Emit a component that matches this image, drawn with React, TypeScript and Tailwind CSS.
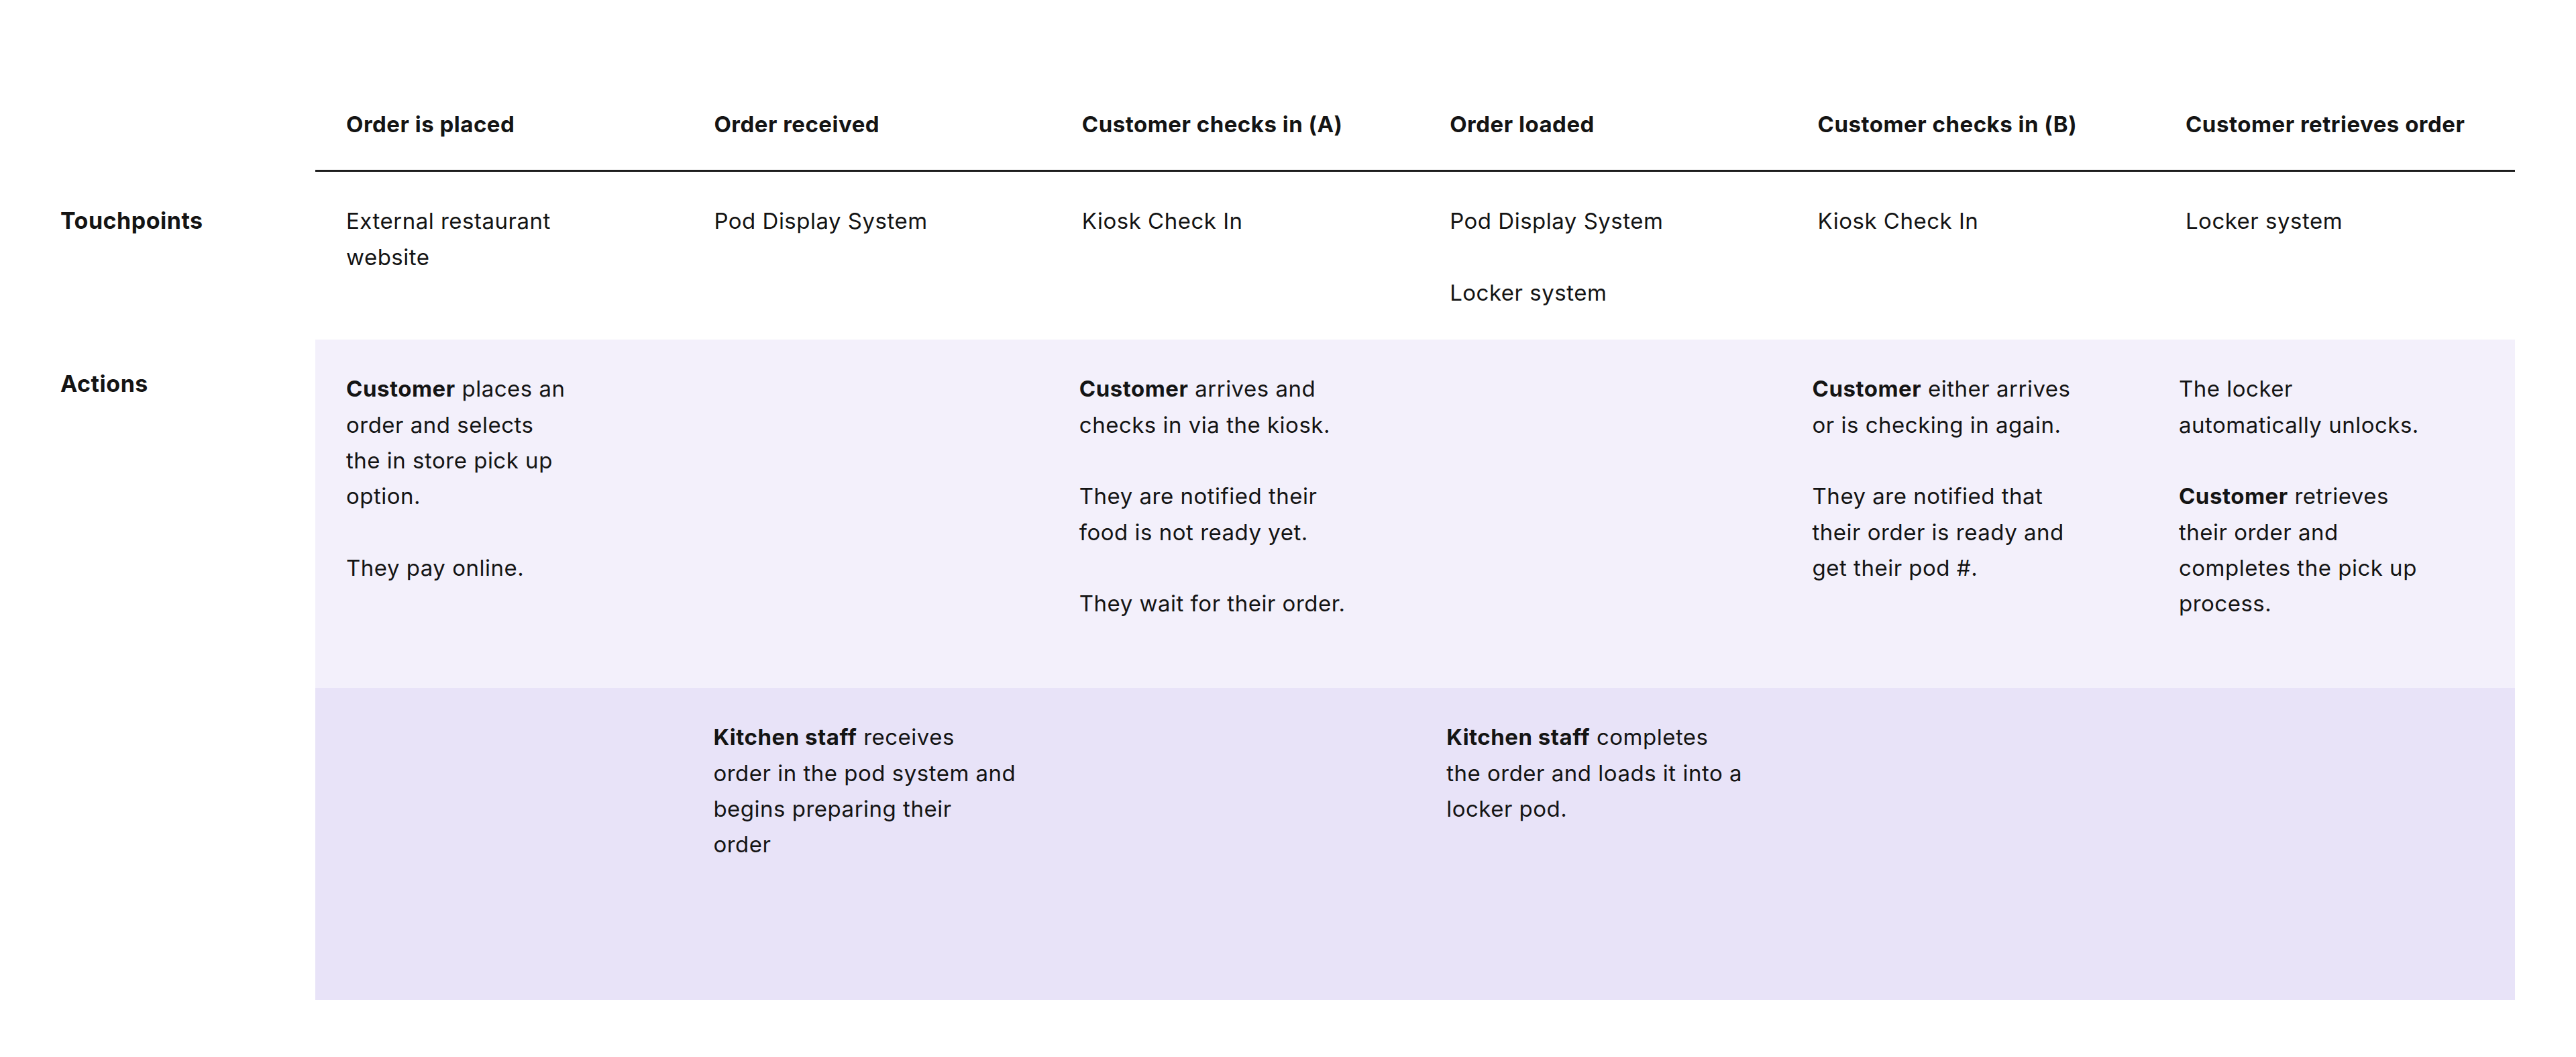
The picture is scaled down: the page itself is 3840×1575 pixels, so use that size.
import React from "react";

type Para = { bold?: string; lines: string[] };

function Block({ paras }: { paras: Para[] }) {
  return (
    <div className="flex flex-col gap-[53.33px]">
      {paras.map((p, i) => (
        <p key={i} className="m-0">
          {p.lines.map((l, j) => (
            <span key={j} className="block whitespace-nowrap">
              {j === 0 && p.bold ? (
                <>
                  <span className="font-bold">{p.bold}</span>
                  {l}
                </>
              ) : (
                l
              )}
            </span>
          ))}
        </p>
      ))}
    </div>
  );
}

const headers = [
  "Order is placed",
  "Order received",
  "Customer checks in (A)",
  "Order loaded",
  "Customer checks in (B)",
  "Customer retrieves order",
];

const touchpoints: string[][] = [
  ["External restaurant", "website"],
  ["Pod Display System"],
  ["Kiosk Check In"],
  ["Pod Display System", "", "Locker system"],
  ["Kiosk Check In"],
  ["Locker system"],
];

export default function App() {
  const grid = "grid grid-cols-[repeat(5,548.4px)_1fr] w-[3279px]";
  return (
    <div className="min-h-screen w-full bg-white font-['Inter','Noto_Sans',sans-serif] text-[33px] leading-[53.33px] tracking-[0.5px] text-[#141414]">
      <div className="pt-[159px]">
        {/* Header row */}
        <div className="flex">
          <div className="w-[470px] shrink-0" />
          <div className={`${grid} border-b-[3px] border-[#1e1e1e] pb-[41px]`}>
            {headers.map((h) => (
              <div key={h} className="pl-[46px] font-bold whitespace-nowrap">
                {h}
              </div>
            ))}
          </div>
        </div>

        {/* Touchpoints row */}
        <div className="flex h-[250px]">
          <div className="w-[470px] shrink-0 pl-[90px] pt-[46px] text-[34px] font-bold">
            Touchpoints
          </div>
          <div className={grid}>
            {touchpoints.map((t, i) => (
              <div key={i} className="pl-[46px] pt-[47px]">
                {t.map((l, j) => (
                  <span key={j} className="block h-[53.33px] whitespace-nowrap">
                    {l}
                  </span>
                ))}
              </div>
            ))}
          </div>
        </div>

        {/* Actions row - customer */}
        <div className="flex h-[519px]">
          <div className="w-[470px] shrink-0 pl-[90px] pt-[39px] text-[34px] font-bold">
            Actions
          </div>
          <div className={`${grid} bg-[#f3f0fb]`}>
            <div className="pl-[46px] pt-[47px]">
              <Block
                paras={[
                  {
                    bold: "Customer",
                    lines: [" places an", "order and selects", "the in store pick up", "option."],
                  },
                  { lines: ["They pay online."] },
                ]}
              />
            </div>
            <div />
            <div className="pl-[42px] pt-[47px]">
              <Block
                paras={[
                  { bold: "Customer", lines: [" arrives and", "checks in via the kiosk."] },
                  { lines: ["They are notified their", "food is not ready yet."] },
                  { lines: ["They wait for their order."] },
                ]}
              />
            </div>
            <div />
            <div className="pl-[38px] pt-[47px]">
              <Block
                paras={[
                  { bold: "Customer", lines: [" either arrives", "or is checking in again."] },
                  {
                    lines: ["They are notified that", "their order is ready and", "get their pod #."],
                  },
                ]}
              />
            </div>
            <div className="pl-[36px] pt-[47px]">
              <Block
                paras={[
                  { lines: ["The locker", "automatically unlocks."] },
                  {
                    bold: "Customer",
                    lines: [" retrieves", "their order and", "completes the pick up", "process."],
                  },
                ]}
              />
            </div>
          </div>
        </div>

        {/* Actions row - kitchen */}
        <div className="flex h-[465px]">
          <div className="w-[470px] shrink-0" />
          <div className={`${grid} bg-[#e8e3f8]`}>
            <div />
            <div className="pl-[45px] pt-[47px]">
              <Block
                paras={[
                  {
                    bold: "Kitchen staff",
                    lines: [" receives", "order in the pod system and", "begins preparing their", "order"],
                  },
                ]}
              />
            </div>
            <div />
            <div className="pl-[41px] pt-[47px]">
              <Block
                paras={[
                  {
                    bold: "Kitchen staff",
                    lines: [" completes", "the order and loads it into a", "locker pod."],
                  },
                ]}
              />
            </div>
            <div />
            <div />
          </div>
        </div>
      </div>
    </div>
  );
}
